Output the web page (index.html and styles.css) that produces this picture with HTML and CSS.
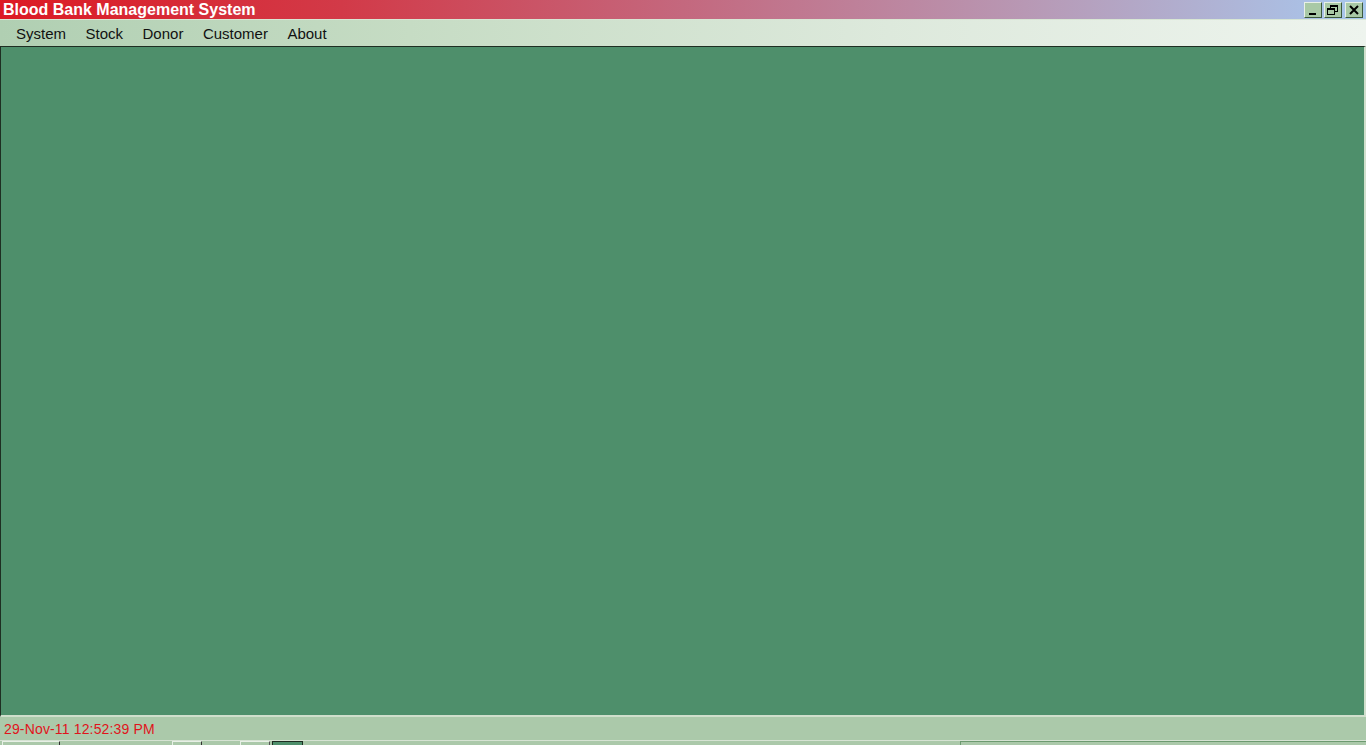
FILE: index.html
```html
<!DOCTYPE html>
<html>
<head>
<meta charset="utf-8">
<title>Blood Bank Management System</title>
<link rel="stylesheet" href="styles.css">
</head>
<body>
<div class="window">
  <div class="titlebar">
    <span class="title">Blood Bank Management System</span>
    <div class="controls">
      <span class="btn"><svg width="16" height="14" viewBox="0 0 16 14"><rect x="4" y="10" width="7" height="2" fill="#000"/></svg></span>
      <span class="btn"><svg width="16" height="14" viewBox="0 0 16 14"><rect x="5.5" y="2.5" width="7" height="6" fill="none" stroke="#000"/><rect x="5" y="2" width="8" height="2" fill="#000"/><rect x="2.5" y="5.5" width="7" height="6" fill="#a9c9a6" stroke="#000"/><rect x="2" y="5" width="8" height="2" fill="#000"/></svg></span>
      <span class="btn btn-close"><svg width="16" height="14" viewBox="0 0 16 14"><path d="M4 3 L12 11 M12 3 L4 11" stroke="#000" stroke-width="2"/></svg></span>
    </div>
  </div>
  <div class="menubar">
    <span class="menu">System</span>
    <span class="menu">Stock</span>
    <span class="menu">Donor</span>
    <span class="menu">Customer</span>
    <span class="menu">About</span>
  </div>
  <div class="workspace"></div>
  <div class="statusbar">
    <span class="datetime">29-Nov-11 12:52:39 PM</span>
  </div>
  <div class="strip">
    <span class="seg seg-a"></span>
    <span class="seg seg-b"></span>
    <span class="seg seg-c"></span>
    <span class="seg seg-d"></span>
    <span class="seg seg-e"></span>
  </div>
</div>
</body>
</html>
```
FILE: styles.css
```css
html, body {
  margin: 0;
  padding: 0;
  width: 1366px;
  height: 745px;
  overflow: hidden;
  font-family: "Liberation Sans", Arial, sans-serif;
}
.window {
  display: flex;
  flex-direction: column;
  width: 1366px;
  height: 745px;
  background: #abc9aa;
}
.titlebar {
  height: 19px;
  flex: none;
  display: flex;
  align-items: center;
  justify-content: space-between;
  background: linear-gradient(to right, #dc1a24 0%, #d23a48 25%, #c4687e 50%, #b898b4 75%, #a8c8ee 100%);
}
.title {
  color: #fff;
  font-weight: bold;
  font-size: 16px;
  padding-left: 3px;
  line-height: 19px;
}
.controls {
  display: flex;
  gap: 2px;
  padding-right: 3px;
}
.controls .btn {
  display: block;
  width: 16px;
  height: 14px;
  background: #a9c9a6;
  border-top: 1px solid #e8f0e6;
  border-left: 1px solid #e8f0e6;
  border-right: 1px solid #3d5a3d;
  border-bottom: 1px solid #3d5a3d;
}
.controls .btn svg { display: block; }
.controls .btn-close { margin-left: 1px; }
.menubar {
  height: 27px;
  flex: none;
  display: flex;
  align-items: center;
  padding-left: 7px;
  border-top: 1px solid #d8e6d4;
  box-sizing: border-box;
  background: linear-gradient(to right, #b0cfb2 0%, #c6dcc4 30%, #dde9dc 65%, #eef4ee 100%);
}
.menu {
  font-size: 15px;
  color: #111;
  padding: 0 9px;
  margin-right: 1.5px;
  line-height: 20px;
  padding-top: 1px;
}
.workspace {
  flex: 1;
  background: #4e8f6b;
  border-top: 1px solid #1e2e22;
  border-left: 1px solid #1e2e22;
  border-right: 2px solid #d0dfcc;
  border-bottom: 2px solid #d0dfcc;
}
.statusbar {
  height: 23px;
  flex: none;
  display: flex;
  align-items: center;
  background: #abc9aa;
  border-bottom: 1px solid #d6e3d3;
}
.datetime {
  color: #e0141c;
  font-size: 14px;
  padding-left: 4px;
  letter-spacing: 0.15px;
}
.strip {
  height: 4px;
  flex: none;
  display: flex;
  background: #abc9aa;
}
.seg {
  display: block;
  height: 4px;
  box-sizing: border-box;
}
.seg-a { width: 58px; margin-left: 2px; border-top: 1px solid #e8f0e6; border-left: 1px solid #e8f0e6; border-right: 1px solid #333; }
.seg-b { width: 30px; margin-left: 112px; border-top: 1px solid #e8f0e6; border-left: 1px solid #e8f0e6; border-right: 1px solid #333; }
.seg-c { width: 30px; margin-left: 38px; border-top: 1px solid #e8f0e6; border-left: 1px solid #e8f0e6; border-right: 1px solid #555; }
.seg-d { width: 31px; margin-left: 2px; background: #4e8f6b; border: 1px solid #1e2e22; border-bottom: none; }
.seg-e { flex: 1; margin-left: 657px; border-top: 1px solid #6d9a70; border-left: 1px solid #6d9a70; }
```
